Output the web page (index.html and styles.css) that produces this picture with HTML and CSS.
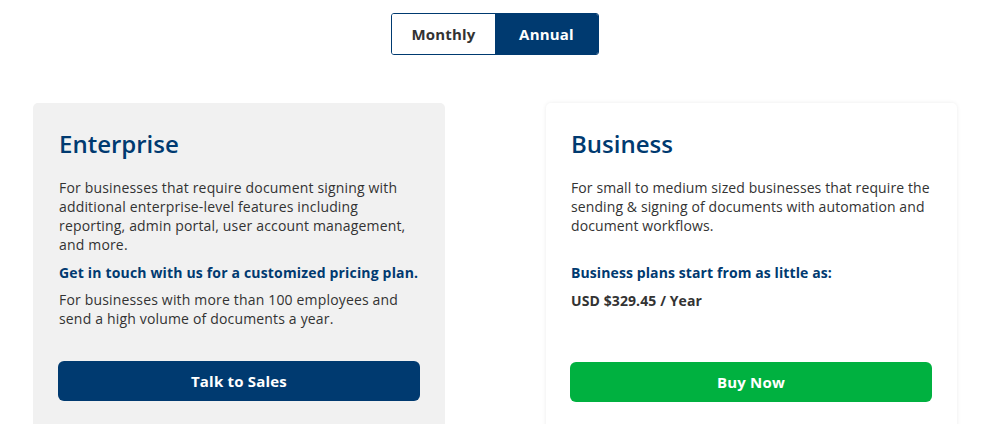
FILE: index.html
```html
<!DOCTYPE html>
<html>
<head>
<meta charset="utf-8">
<link rel="stylesheet" href="styles.css">
</head>
<body>
<div class="page">
  <div class="toggle">
    <button class="tg">Monthly</button>
    <button class="tg active">Annual</button>
  </div>
  <div class="cards">
    <div class="card grey">
      <h2 class="title">Enterprise</h2>
      <p class="desc">For businesses that require document signing with additional enterprise-level features including reporting, admin portal, user account management, and more.</p>
      <p class="strong navy">Get in touch with us for a customized pricing plan.</p>
      <p class="desc small-gap">For businesses with more than 100 employees and send a high volume of documents a year.</p>
      <button class="btn navy-btn">Talk to Sales</button>
    </div>
    <div class="card white">
      <h2 class="title">Business</h2>
      <p class="desc">For small to medium sized businesses that require the sending &amp; signing of documents with automation and document workflows.</p>
      <p class="strong navy biz-gap">Business plans start from as little as:</p>
      <p class="strong dark">USD $329.45 / Year</p>
      <button class="btn green-btn">Buy Now</button>
    </div>
  </div>
</div>
</body>
</html>
```
FILE: styles.css
```css
html, body {
  margin: 0;
  padding: 0;
  background: #ffffff;
}
body {
  font-family: "Open Sans", "Noto Sans", sans-serif;
  color: #333333;
  overflow: hidden;
}
.page {
  width: 986px;
  height: 424px;
  display: flex;
  flex-direction: column;
  align-items: flex-start;
  overflow: hidden;
}
.toggle {
  flex-shrink: 0;
  margin: 13px 0 0 391px;
  display: flex;
  border: 1px solid #003a70;
  border-radius: 3px;
  overflow: hidden;
}
.tg {
  width: 103px;
  height: 40px;
  border: 0;
  background: #ffffff;
  color: #333333;
  font-family: inherit;
  font-size: 15px;
  font-weight: 700;
  letter-spacing: 0.2px;
  padding: 0;
}
.tg.active {
  background: #003a70;
  color: #ffffff;
}
.cards {
  flex-shrink: 0;
  margin: 48px 0 0 33px;
  display: flex;
  gap: 101px;
}
.card {
  flex-shrink: 0;
  width: 412px;
  height: 340px;
  box-sizing: border-box;
  padding: 25px 25px 0 26px;
  border-radius: 5px;
  display: flex;
  flex-direction: column;
  letter-spacing: 0.17px;
}
.card.grey {
  background: #f1f1f1;
}
.card.white {
  background: #ffffff;
  width: 411px;
  padding-left: 25px;
  padding-right: 24px;
  letter-spacing: 0.1px;
  box-shadow: 0 0 4px rgba(0, 0, 0, 0.08);
}
.title {
  margin: 0;
  font-size: 24px;
  line-height: 32px;
  font-weight: 600;
  letter-spacing: 0;
  color: #003a70;
}
.desc {
  margin: 18px 0 0 0;
  font-size: 14px;
  line-height: 19px;
  color: #333333;
}
.desc.small-gap {
  margin-top: 8px;
}
.strong {
  margin: 9px 0 0 0;
  font-size: 14px;
  line-height: 19px;
  font-weight: 700;
}
.navy { color: #003a70; }
.dark { color: #333333; }
.biz-gap { margin-top: 28px; }
.btn {
  flex-shrink: 0;
  width: 362px;
  height: 40px;
  margin-top: 33px;
  margin-left: -1px;
  border: 0;
  border-radius: 6px;
  color: #ffffff;
  font-family: inherit;
  font-size: 15px;
  font-weight: 700;
  letter-spacing: 0.2px;
}
.navy-btn { background: #003a70; }
.green-btn { background: #00b140; margin-top: 52px; }
```
